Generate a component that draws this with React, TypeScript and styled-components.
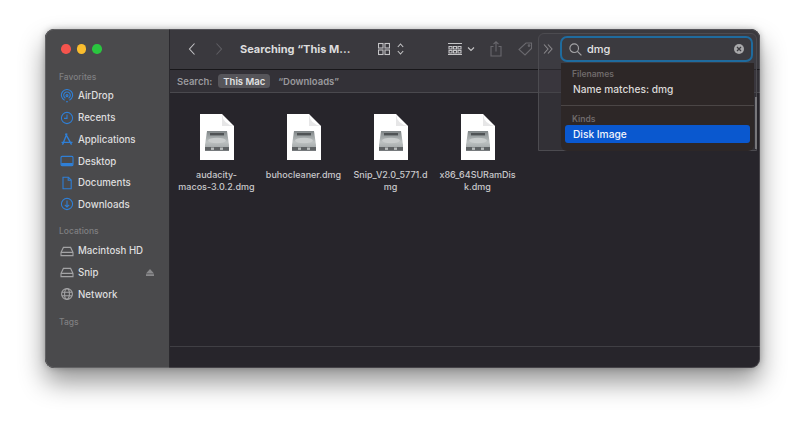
import React from 'react'
import styled, { createGlobalStyle } from 'styled-components'

const Global = createGlobalStyle`
  html, body { margin: 0; padding: 0; background: #ffffff; }
  body { font-family: Inter, "Liberation Sans", sans-serif; -webkit-font-smoothing: antialiased; }
`

const Page = styled.div`
  width: 800px;
  height: 425px;
  padding: 29px 40px 57px 45px;
  box-sizing: border-box;
  overflow: hidden;
`

const Window = styled.div`
  position: relative;
  height: 100%;
  display: flex;
  border-radius: 9px;
  overflow: hidden;
  background: #27252b;
  box-shadow: 0 14px 26px rgba(0, 0, 0, 0.42), 0 0 6px rgba(0, 0, 0, 0.25);

  &::after {
    content: '';
    position: absolute;
    inset: 0;
    border-radius: 9px;
    box-shadow: inset 0 0 0 1px rgba(255, 255, 255, 0.14);
    pointer-events: none;
  }
`

const WindowFrame = styled.div`
  position: relative;
  height: 100%;
`

const Sidebar = styled.aside`
  width: 125px;
  flex: none;
  background: #4a4a4c;
  box-sizing: border-box;
  padding: 15px 0 0 10px;
  border-right: 1px solid #2a292d;
`

const Lights = styled.div`
  display: flex;
  gap: 6px;
  margin: 0 0 17px 6px;
`

const Light = styled.span<{ $color: string }>`
  width: 9.5px;
  height: 9.5px;
  border-radius: 50%;
  background: ${p => p.$color};
`

const SectionLabel = styled.div<{ $top?: number }>`
  font-size: 8.5px;
  font-weight: 500;
  line-height: 12px;
  color: #7f7f81;
  margin: ${p => p.$top ?? 0}px 0 0 4px;
`

const SidebarList = styled.div`
  display: flex;
  flex-direction: column;
  margin-top: 2.6px;
`

const SidebarRow = styled.div`
  height: 21.7px;
  display: flex;
  align-items: center;
  gap: 4px;
  padding-left: 5px;
  font-size: 9.7px;
  font-weight: 500;
  color: #dededf;
`

const RowIcon = styled.svg<{ $color: string }>`
  width: 14px;
  height: 14px;
  flex: none;
  fill: none;
  stroke: ${p => p.$color};
  stroke-width: 1.1;
`

const Eject = styled.svg`
  width: 8px;
  height: 7px;
  margin-left: auto;
  margin-right: 15px;
  fill: #8a8a8c;
`

const Main = styled.main`
  flex: 1;
  min-width: 0;
  display: flex;
  flex-direction: column;
`

const Toolbar = styled.header`
  height: 41px;
  flex: none;
  display: flex;
  align-items: center;
  padding: 0 7px 0 16px;
  background: #3a393e;
  border-bottom: 1px solid #18171a;
  box-sizing: border-box;
`

const ToolIcon = styled.svg<{ $w: number; $ml: number; $color?: string }>`
  width: ${p => p.$w}px;
  height: 16px;
  margin-left: ${p => p.$ml}px;
  flex: none;
  fill: none;
  stroke: ${p => p.$color ?? '#c4c4c6'};
  stroke-width: 1.1;
`

const Title = styled.div`
  width: 118px;
  margin-left: 17px;
  flex: none;
  font-size: 11px;
  font-weight: 700;
  color: #dcdcdd;
  white-space: nowrap;
`

const SearchField = styled.div`
  width: 193px;
  height: 26px;
  margin-left: auto;
  position: relative;
  z-index: 2;
  flex: none;
  display: flex;
  align-items: center;
  gap: 5px;
  padding: 0 7px 0 7px;
  box-sizing: border-box;
  border: 2.5px solid #1f6b9e;
  border-radius: 7px;
  background: #3b3a3f;
  font-size: 11px;
  font-weight: 500;
  color: #e4e4e5;
`

const ClearButton = styled.span`
  width: 10px;
  height: 10px;
  margin-left: auto;
  border-radius: 50%;
  background: #a8a8aa;
  display: flex;
  align-items: center;
  justify-content: center;
`

const ScopeBar = styled.div`
  height: 23px;
  flex: none;
  display: flex;
  align-items: center;
  padding-left: 7px;
  background: #333137;
  border-bottom: 1px solid #4a494e;
  box-sizing: border-box;
  font-size: 9.5px;
  font-weight: 600;
  color: #9a999d;
`

const ScopePill = styled.span`
  margin-left: 6px;
  padding: 1.5px 5px;
  border-radius: 3.5px;
  background: #56555a;
  color: #e2e2e3;
`

const ScopeLink = styled.span`
  margin-left: 8px;
`

const Files = styled.section`
  flex: 1;
  display: grid;
  grid-template-columns: repeat(4, 87px);
  align-content: start;
  padding: 21px 0 0 3px;
`

const FileCell = styled.div`
  display: flex;
  flex-direction: column;
  align-items: center;
`

const FileName = styled.div`
  margin-top: 9px;
  font-size: 9px;
  line-height: 12px;
  font-weight: 500;
  text-align: center;
  color: #c9c9cb;
  white-space: pre-line;
`

const Footer = styled.footer`
  height: 22px;
  flex: none;
  border-top: 1px solid #403f44;
  box-sizing: border-box;
`

const TrackingPanel = styled.div`
  position: absolute;
  top: 4px;
  left: 493px;
  width: 219px;
  height: 118px;
  box-sizing: border-box;
  border: 1px solid #4c4b50;
  border-radius: 6px 6px 0 0;
  background: rgba(64, 63, 68, 0.45);
  z-index: 1;
`

const Popover = styled.div`
  position: absolute;
  top: 34px;
  left: 516px;
  width: 193px;
  height: 88px;
  box-sizing: border-box;
  border-radius: 0 0 6px 6px;
  background: #2d2727;
  padding: 5px 4px 0;
  z-index: 2;
`

const PopLabel = styled.div`
  font-size: 8.5px;
  font-weight: 600;
  line-height: 12px;
  color: #6f6a6a;
  padding-left: 7px;
`

const PopRow = styled.div<{ $active?: boolean }>`
  height: 18px;
  display: flex;
  align-items: center;
  padding-left: 8px;
  border-radius: 3px;
  font-size: 10.2px;
  font-weight: 500;
  color: ${p => (p.$active ? '#f2f5fb' : '#dcdad9')};
  background: ${p => (p.$active ? '#0a58cf' : 'transparent')};
`

const PopDivider = styled.div`
  height: 1px;
  margin: 7px -4px 7px -4px;
  background: #4b4646;
`

const Scrollbar = styled.div`
  position: absolute;
  top: 68px;
  left: 710px;
  width: 2px;
  height: 52px;
  background: #77767a;
  z-index: 2;
`

const DiskFile = () => (
  <svg width="36" height="46" viewBox="0 0 36 46">
    <defs>
      <linearGradient id="disk" x1="0" y1="0" x2="0" y2="1">
        <stop offset="0" stopColor="#7f8587" />
        <stop offset="0.55" stopColor="#bcc1c1" />
        <stop offset="1" stopColor="#999e9f" />
      </linearGradient>
    </defs>
    <path d="M1 0H23L35 12V46H1Z" fill="#ffffff" />
    <path d="M23 0Q24 10 35 12H23Z" fill="#e6e6e7" />
    <path d="M8 17H28L30 31V37H6V31Z" fill="url(#disk)" />
    <rect x="11" y="19" width="14" height="2.4" fill="#4f5355" />
    <ellipse cx="18" cy="26.5" rx="9" ry="2.8" fill="#c9cdcd" />
    <rect x="6" y="33" width="24" height="3.6" fill="#5f6365" />
    <rect x="12" y="33.5" width="3" height="2.4" fill="#b8bcbc" />
    <rect x="21" y="33.5" width="3" height="2.4" fill="#b8bcbc" />
  </svg>
)

const blue = '#2f7fd6'
const gray = '#a3a3a5'

const favorites = [
  { name: 'AirDrop', icon: <><path d="M4.6 11.2a5.6 5.6 0 1 1 4.8 0" /><path d="M5.4 9.2a3.3 3.3 0 1 1 3.2 0" /><circle cx="7" cy="6.6" r="1" /><path d="M6 12.8h2" /></> },
  { name: 'Recents', icon: <><circle cx="7" cy="7" r="5.6" /><path d="M7 3.6V7.4H4" /></> },
  { name: 'Applications', icon: <g strokeWidth="1.4"><path d="M7 1.6L3.4 10.4M5.4 1.6l5 8.8M1.5 10.4h11" /><path d="M2.4 12.6l1.2-2M11.6 12.6l-1.2-2" /></g> },
  { name: 'Desktop', icon: <><rect x="1" y="2.4" width="12" height="9.2" rx="1" /><path d="M1.2 10h11.6" strokeWidth="1.8" /></> },
  { name: 'Documents', icon: <><path d="M3 1.2H8.4L11.2 4V12.8H3Z" /><path d="M8.2 1.4V4.2H11" /></> },
  { name: 'Downloads', icon: <><circle cx="7" cy="7" r="5.6" /><path d="M7 3.6V9.6M4.8 7.8L7 10l2.2-2.2" /></> },
]

const driveIcon = <><path d="M3.4 3.4H10.6L13 8.4V11.6H1V8.4Z" /><path d="M1 8.4H13" /></>

const locations = [
  { name: 'Macintosh HD', icon: driveIcon, eject: false },
  { name: 'Snip', icon: driveIcon, eject: true },
  { name: 'Network', icon: <><circle cx="7" cy="7" r="5.4" /><ellipse cx="7" cy="7" rx="2.4" ry="5.4" /><path d="M1.8 5.2H12.2M1.8 8.8H12.2" /></>, eject: false },
]

const files = ['audacity-\nmacos-3.0.2.dmg', 'buhocleaner.dmg', 'Snip_V2.0_5771.d\nmg', 'x86_64SURamDis\nk.dmg']

export default function App() {
  return (
    <Page>
      <Global />
      <WindowFrame>
        <Window>
          <Sidebar>
            <Lights>
              <Light $color="#f5544d" />
              <Light $color="#fabd2e" />
              <Light $color="#2ac63f" />
            </Lights>
            <SectionLabel>Favorites</SectionLabel>
            <SidebarList>
              {favorites.map(item => (
                <SidebarRow key={item.name}>
                  <RowIcon $color={blue} viewBox="0 0 14 14">{item.icon}</RowIcon>
                  {item.name}
                </SidebarRow>
              ))}
            </SidebarList>
            <SectionLabel $top={10}>Locations</SectionLabel>
            <SidebarList>
              {locations.map(item => (
                <SidebarRow key={item.name}>
                  <RowIcon $color={gray} viewBox="0 0 14 14">{item.icon}</RowIcon>
                  {item.name}
                  {item.eject && (
                    <Eject viewBox="0 0 8 7"><path d="M4 0L8 4.4H0Z" /><rect y="5.2" width="8" height="1.8" /></Eject>
                  )}
                </SidebarRow>
              ))}
            </SidebarList>
            <SectionLabel $top={11}>Tags</SectionLabel>
          </Sidebar>
          <Main>
            <Toolbar>
              <ToolIcon $w={8} $ml={2} viewBox="0 0 8 16"><path d="M6.5 2.5L1.5 8l5 5.5" /></ToolIcon>
              <ToolIcon $w={8} $ml={19} $color="#5f5e63" viewBox="0 0 8 16"><path d="M1.5 2.5L6.5 8l-5 5.5" /></ToolIcon>
              <Title>Searching “This M...</Title>
              <ToolIcon $w={12} $ml={20} viewBox="0 0 12 16"><rect x="0.5" y="2.5" width="4.5" height="4.5" /><rect x="7" y="2.5" width="4.5" height="4.5" /><rect x="0.5" y="9" width="4.5" height="4.5" /><rect x="7" y="9" width="4.5" height="4.5" /></ToolIcon>
              <ToolIcon $w={7} $ml={7} viewBox="0 0 7 16"><path d="M0.8 6L3.5 3l2.7 3M0.8 10l2.7 3 2.7-3" /></ToolIcon>
              <ToolIcon $w={14} $ml={44} viewBox="0 0 14 16"><path d="M0 2.5H14M0 13.5H14" /><path d="M1 5.5h3v2.5h-3zM5.5 5.5h3v2.5h-3zM10 5.5h3v2.5h-3zM1 9.5h3v2.5h-3zM5.5 9.5h3v2.5h-3zM10 9.5h3v2.5h-3z" /></ToolIcon>
              <ToolIcon $w={8} $ml={5} viewBox="0 0 8 16"><path d="M1 6.5l3 3 3-3" /></ToolIcon>
              <ToolIcon $w={12} $ml={15} $color="#69686d" viewBox="0 0 12 16"><path d="M3.5 5.5H1V15H11V5.5H8.5M6 10.5V1M3.5 3.2L6 0.8l2.5 2.4" /></ToolIcon>
              <ToolIcon $w={15} $ml={16} $color="#69686d" viewBox="0 0 15 16"><path d="M1 8.5L8 2h5.5v5.5L7 14Z" /><circle cx="11" cy="4.6" r="0.8" /></ToolIcon>
              <ToolIcon $w={10} $ml={10} viewBox="0 0 10 16"><path d="M1 3.5L5 8l-4 4.5M5 3.5L9 8l-4 4.5" /></ToolIcon>
              <SearchField>
                <svg width="13" height="13" viewBox="0 0 13 13" fill="none" stroke="#a5a5a7" strokeWidth="1.1"><circle cx="5.2" cy="5.2" r="4.3" /><path d="M8.4 8.4L12.4 12.4" /></svg>
                dmg
                <ClearButton>
                  <svg width="6" height="6" viewBox="0 0 6 6" fill="none" stroke="#3b3a3f" strokeWidth="1.3"><path d="M1 1L5 5M5 1L1 5" /></svg>
                </ClearButton>
              </SearchField>
            </Toolbar>
            <ScopeBar>
              Search:
              <ScopePill>This Mac</ScopePill>
              <ScopeLink>“Downloads”</ScopeLink>
            </ScopeBar>
            <Files>
              {files.map(name => (
                <FileCell key={name}>
                  <DiskFile />
                  <FileName>{name}</FileName>
                </FileCell>
              ))}
            </Files>
            <Footer />
          </Main>
        </Window>
        <TrackingPanel />
        <Popover>
          <PopLabel>Filenames</PopLabel>
          <PopRow>Name matches: dmg</PopRow>
          <PopDivider />
          <PopLabel>Kinds</PopLabel>
          <PopRow $active>Disk Image</PopRow>
        </Popover>
        <Scrollbar />
      </WindowFrame>
    </Page>
  )
}
